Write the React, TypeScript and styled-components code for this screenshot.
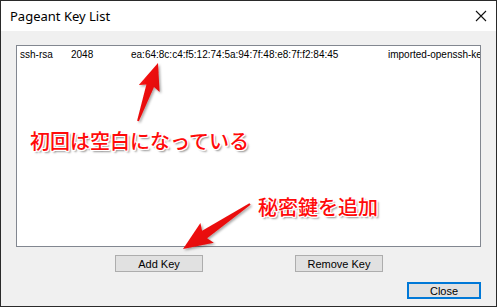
import React from "react";
import styled, { createGlobalStyle } from "styled-components";

const Global = createGlobalStyle`
  html, body { margin: 0; padding: 0; background: #ffffff; }
  body { width: 497px; height: 307px; overflow: hidden; }
`;

const Frame = styled.div`
  position: relative;
  box-sizing: border-box;
  width: 497px;
  height: 307px;
  border: 1px solid #2a2a2a;
  display: flex;
  flex-direction: column;
  background: #f0f0f0;
  font-family: "Liberation Sans", Arial, sans-serif;
`;

const TitleBar = styled.div`
  height: 30px;
  flex: none;
  background: #ffffff;
  display: flex;
  align-items: center;
  justify-content: space-between;
  padding: 0 9px 0 9px;
`;

const Title = styled.span`
  font-family: "Noto Sans", "Open Sans", sans-serif;
  font-size: 13px;
  color: #000;
  margin-top: -1px;
`;

const Body = styled.div`
  flex: 1;
  display: flex;
  flex-direction: column;
  padding: 14px 15px 0 15px;
`;

const ListBox = styled.div`
  box-sizing: border-box;
  height: 202px;
  background: #fff;
  border: 1px solid #828790;
  padding: 3px 0 0 3px;
  overflow: hidden;
`;

const Row = styled.div`
  display: flex;
  white-space: nowrap;
  font-family: "Liberation Sans", Arial, sans-serif;
  font-size: 10px;
  line-height: 12px;
  color: #000;
`;

const Cell = styled.span<{ $w?: number }>`
  flex: none;
  width: ${(p) => (p.$w ? `${p.$w}px` : "auto")};
`;

const ButtonRow = styled.div`
  display: flex;
  justify-content: center;
  gap: 92px;
  margin-top: 8px;
  padding-left: 1px;
`;

const Button = styled.div<{ $w: number; $default?: boolean }>`
  box-sizing: border-box;
  width: ${(p) => p.$w}px;
  height: 17px;
  background: #e1e1e1;
  border: ${(p) => (p.$default ? "2px solid #0078d7" : "1px solid #adadad")};
  display: flex;
  align-items: center;
  justify-content: center;
  font-family: "Liberation Sans", Arial, sans-serif;
  font-size: 11px;
  color: #000;
`;

const CloseRow = styled.div`
  display: flex;
  justify-content: flex-end;
  margin-top: 10px;
`;

const Overlay = styled.svg`
  position: absolute;
  left: -1px;
  top: -1px;
  width: 497px;
  height: 307px;
  pointer-events: none;
`;

const Label = styled.div<{ $x: number; $y: number }>`
  position: absolute;
  left: ${(p) => p.$x}px;
  top: ${(p) => p.$y}px;
  font-family: "Noto Sans CJK JP", "Noto Sans", sans-serif;
  font-size: 20px;
  font-weight: 500;
  line-height: 24px;
  color: #ff0a0a;
  white-space: nowrap;
  pointer-events: none;
  text-shadow:
    1px 0 0 #fff, -1px 0 0 #fff, 0 1px 0 #fff, 0 -1px 0 #fff,
    1px 1px 0 #fff, -1px -1px 0 #fff, 1px -1px 0 #fff, -1px 1px 0 #fff,
    2px 2px 2px rgba(0, 0, 0, 0.45);
`;

function arrowPoints(
  tip: [number, number],
  tail: [number, number],
  L: number,
  W: number,
  w1: number,
  w0: number
) {
  const dx = tip[0] - tail[0];
  const dy = tip[1] - tail[1];
  const len = Math.hypot(dx, dy);
  const ux = dx / len;
  const uy = dy / len;
  const nx = -uy;
  const ny = ux;
  const bx = tip[0] - ux * L;
  const by = tip[1] - uy * L;
  const pts: [number, number][] = [
    [tail[0] + nx * w0, tail[1] + ny * w0],
    [bx + nx * w1, by + ny * w1],
    [bx + nx * W - ux * 3, by + ny * W - uy * 3],
    tip,
    [bx - nx * W - ux * 3, by - ny * W - uy * 3],
    [bx - nx * w1, by - ny * w1],
    [tail[0] - nx * w0, tail[1] - ny * w0],
  ];
  return pts.map((p) => `${p[0].toFixed(1)},${p[1].toFixed(1)}`).join(" ");
}

export default function App() {
  return (
    <>
      <Global />
      <Frame>
        <TitleBar>
          <Title>Pageant Key List</Title>
          <svg width="12" height="12" viewBox="0 0 12 12">
            <path d="M1 1 L11 11 M11 1 L1 11" stroke="#111" strokeWidth="1.1" fill="none" />
          </svg>
        </TitleBar>
        <Body>
          <ListBox>
            <Row>
              <Cell $w={51}>ssh-rsa</Cell>
              <Cell $w={60}>2048</Cell>
              <Cell $w={257}>ea:64:8c:c4:f5:12:74:5a:94:7f:48:e8:7f:f2:84:45</Cell>
              <Cell>imported-openssh-key</Cell>
            </Row>
          </ListBox>
          <ButtonRow>
            <Button $w={88}>Add Key</Button>
            <Button $w={88}>Remove Key</Button>
          </ButtonRow>
          <CloseRow>
            <Button $w={74} $default>
              Close
            </Button>
          </CloseRow>
        </Body>
        <Overlay viewBox="0 0 497 307">
          <defs>
            <filter id="sh" x="-30%" y="-30%" width="160%" height="160%">
              <feDropShadow dx="1.5" dy="1.5" stdDeviation="1.2" floodColor="#000" floodOpacity="0.35" />
            </filter>
            <linearGradient id="rg" x1="0" y1="0" x2="1" y2="1">
              <stop offset="0" stopColor="#ff1a1a" />
              <stop offset="1" stopColor="#d40000" />
            </linearGradient>
          </defs>
          <polygon
            points={arrowPoints([158, 63], [138, 121], 24, 11, 4, 1)}
            fill="url(#rg)"
            filter="url(#sh)"
          />
          <polygon
            points={arrowPoints([183, 249], [250, 204], 26, 12, 4.5, 1)}
            fill="url(#rg)"
            filter="url(#sh)"
          />
        </Overlay>
        <Label $x={29} $y={128}>初回は空白になっている</Label>
        <Label $x={257} $y={194}>秘密鍵を追加</Label>
      </Frame>
    </>
  );
}
